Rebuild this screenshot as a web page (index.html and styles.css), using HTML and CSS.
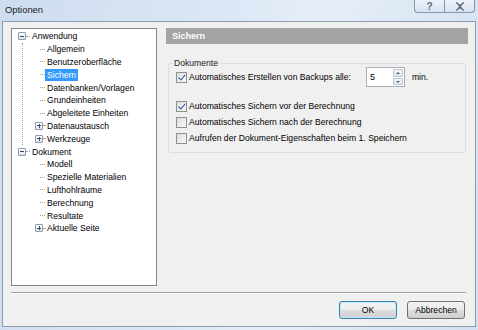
FILE: index.html
```html
<!DOCTYPE html>
<html lang="de">
<head>
    <meta charset="UTF-8">
    <title>Optionen</title>
    <link rel="stylesheet" href="styles.css">
</head>
<body>
    <div class="window">
        <div class="titlebar">
            <span class="title">Optionen</span>
            <div class="caption-buttons">
                <span class="cap-btn help">?</span>
                <span class="cap-btn close">
                    <svg width="10" height="9" viewBox="0 0 10 9">
                        <path d="M1 0.5 L5 3.5 L9 0.5 M1 8.5 L5 5.5 L9 8.5 M2 1 L8 8 M8 1 L2 8" fill="none" stroke="#5c6b80" stroke-width="1.2"/>
                    </svg>
                </span>
            </div>
        </div>

        <div class="client">
            <div class="main">
                <div class="tree">
                    <div class="node root">
                        <span class="exp minus"></span><span class="hline"></span><span class="label">Anwendung</span>
                    </div>
                    <div class="children line">
                        <div class="node"><span class="tick"></span><span class="label">Allgemein</span></div>
                        <div class="node"><span class="tick"></span><span class="label">Benutzeroberfläche</span></div>
                        <div class="node"><span class="tick"></span><span class="label selected">Sichern</span></div>
                        <div class="node"><span class="tick"></span><span class="label">Datenbanken/Vorlagen</span></div>
                        <div class="node"><span class="tick"></span><span class="label">Grundeinheiten</span></div>
                        <div class="node"><span class="tick"></span><span class="label">Abgeleitete Einheiten</span></div>
                        <div class="node"><span class="exp plus"></span><span class="stub"></span><span class="label">Datenaustausch</span></div>
                        <div class="node"><span class="exp plus"></span><span class="stub"></span><span class="label">Werkzeuge</span></div>
                    </div>
                    <div class="node root">
                        <span class="exp minus"></span><span class="hline"></span><span class="label">Dokument</span>
                    </div>
                    <div class="children">
                        <div class="node"><span class="tick"></span><span class="label">Modell</span></div>
                        <div class="node"><span class="tick"></span><span class="label">Spezielle Materialien</span></div>
                        <div class="node"><span class="tick"></span><span class="label">Lufthohlräume</span></div>
                        <div class="node"><span class="tick"></span><span class="label">Berechnung</span></div>
                        <div class="node"><span class="tick"></span><span class="label">Resultate</span></div>
                        <div class="node"><span class="exp plus"></span><span class="stub"></span><span class="label">Aktuelle Seite</span></div>
                    </div>
                </div>

                <div class="panel">
                    <div class="panel-header">Sichern</div>
                    <fieldset class="group">
                        <legend>Dokumente</legend>
                        <div class="row first">
                            <span class="check checked"></span>
                            <span class="text">Automatisches Erstellen von Backups alle:</span>
                            <div class="spin">
                                <span class="spin-value">5</span>
                                <div class="spin-buttons">
                                    <span class="spin-btn up"></span>
                                    <span class="spin-btn down"></span>
                                </div>
                            </div>
                            <span class="unit">min.</span>
                        </div>
                        <div class="row spaced">
                            <span class="check checked"></span>
                            <span class="text">Automatisches Sichern vor der Berechnung</span>
                        </div>
                        <div class="row">
                            <span class="check"></span>
                            <span class="text">Automatisches Sichern nach der Berechnung</span>
                        </div>
                        <div class="row">
                            <span class="check"></span>
                            <span class="text">Aufrufen der Dokument-Eigenschaften beim 1. Speichern</span>
                        </div>
                    </fieldset>
                </div>
            </div>

            <div class="separator"></div>

            <div class="buttons">
                <button class="btn default">OK</button>
                <button class="btn">Abbrechen</button>
            </div>
        </div>
    </div>
</body>
</html>
```

FILE: styles.css
```css
* {
    box-sizing: border-box;
}

body {
    margin: 0;
    width: 478px;
    height: 330px;
    overflow: hidden;
    font-family: "Liberation Sans", Arial, sans-serif;
    font-size: 8.6px;
    color: #000;
    background: #d3e1f1;
}

.window {
    width: 478px;
    height: 330px;
    background: linear-gradient(100deg, #cddcef 0%, #dce8f5 45%, #e6eef8 60%, #d2e0f1 100%);
}

.titlebar {
    height: 21px;
    display: flex;
    justify-content: space-between;
    align-items: flex-start;
}

.title {
    padding: 4px 0 0 5px;
    font-size: 9.4px;
    color: #1b1b1b;
}

.caption-buttons {
    display: flex;
    margin-right: 3px;
}

.cap-btn {
    width: 30px;
    height: 13px;
    display: flex;
    align-items: center;
    justify-content: center;
    border: 1px solid #8797ab;
    border-top: none;
    background: linear-gradient(#eef3f9, #d8e3f0);
    color: #5c6b80;
    font-size: 10px;
    font-weight: bold;
}

.cap-btn.help {
    border-radius: 0 0 0 4px;
    border-right: none;
}

.cap-btn.close {
    width: 31px;
    border-radius: 0 0 4px 0;
}

.client {
    margin: 0 2px;
    height: 306px;
    border: 1px solid #8e9caf;
    background: #f0f0f0;
    padding: 6px 7px 0 8px;
}

.main {
    display: flex;
    gap: 9px;
}

/* tree */

.tree {
    width: 146px;
    height: 258px;
    background: #fff;
    border: 1px solid #828790;
    padding-top: 1px;
}

.node {
    height: 12.8px;
    display: flex;
    align-items: center;
    white-space: nowrap;
}

.root {
    padding-left: 6px;
}

.exp {
    width: 8px;
    height: 8px;
    border: 1px solid #8d9bb0;
    border-radius: 1px;
    background: linear-gradient(#fff, #dfe4ea);
    position: relative;
    flex: none;
}

.exp::before {
    content: "";
    position: absolute;
    left: 1px;
    top: 2.5px;
    width: 4px;
    height: 1px;
    background: #3b4d6b;
}

.exp.plus::after {
    content: "";
    position: absolute;
    left: 2.5px;
    top: 1px;
    width: 1px;
    height: 4px;
    background: #3b4d6b;
}

.hline {
    width: 4px;
    border-top: 1px dotted #a0a0a0;
}

.stub {
    width: 2px;
    border-top: 1px dotted #a0a0a0;
}

.tick {
    width: 5px;
    margin-left: 5px;
    border-top: 1px dotted #a0a0a0;
}

.label {
    padding: 0 2px;
    line-height: 12px;
}

.label.selected {
    background: #3399ff;
    color: #fff;
}

.children {
    margin-left: 10px;
    border-left: 1px dotted transparent;
    padding-left: 12px;
}

.children.line {
    border-left-color: #a0a0a0;
}

/* right panel */

.panel {
    width: 302px;
}

.panel-header {
    height: 16px;
    background: #a3a3a3;
    color: #fff;
    font-weight: bold;
    font-size: 9px;
    line-height: 16px;
    padding-left: 6px;
}

.group {
    margin: 13px 2px 0;
    border: 1px solid #d5dfe5;
    border-radius: 3px;
    padding: 0 7px 6px 7px;
    min-width: 0;
}

.group legend {
    padding: 0 1px;
    margin-left: -3px;
    line-height: 12px;
    color: #1b1b1b;
}

.row {
    display: flex;
    align-items: center;
    height: 16px;
}

.row.first {
    height: 20px;
    margin-top: -2px;
}

.row.spaced {
    margin-top: 11px;
}

.check {
    width: 11px;
    height: 11px;
    border: 1px solid #8f8f8f;
    background: linear-gradient(135deg, #dcdcdc, #fbfbfb);
    margin-right: 2px;
    position: relative;
    flex: none;
}

.check.checked::after {
    content: "";
    position: absolute;
    left: 3px;
    top: 0.5px;
    width: 2.5px;
    height: 5.5px;
    border: solid #2a55a8;
    border-width: 0 1.5px 1.5px 0;
    transform: rotate(40deg);
}

.spin {
    margin-left: 15px;
    width: 39px;
    height: 20px;
    border: 1px solid #abadb3;
    background: #fff;
    display: flex;
    align-items: center;
    justify-content: space-between;
    padding: 1px 1px 1px 3px;
}

.spin-value {
    font-size: 9px;
}

.spin-buttons {
    display: flex;
    flex-direction: column;
    gap: 1px;
    height: 100%;
}

.spin-btn {
    width: 10px;
    flex: 1;
    border: 1px solid #b8c6d6;
    border-radius: 1px;
    background: linear-gradient(#f4f7fb, #dde6f0);
    position: relative;
}

.spin-btn::after {
    content: "";
    position: absolute;
    left: 2px;
    top: 2px;
    border-left: 2px solid transparent;
    border-right: 2px solid transparent;
}

.spin-btn.up::after {
    border-bottom: 2px solid #4c607a;
}

.spin-btn.down::after {
    border-top: 2px solid #4c607a;
}

.unit {
    margin-left: 7px;
}

/* bottom */

.separator {
    margin: 6px 2px 0 0;
    border-top: 1px solid #a0a0a0;
    border-bottom: 1px solid #fff;
}

.buttons {
    display: flex;
    justify-content: flex-end;
    gap: 10px;
    margin-top: 7px;
    padding-right: 3px;
}

.btn {
    width: 58px;
    height: 18px;
    font-family: inherit;
    font-size: 8.6px;
    color: #000;
    border: 1px solid #707070;
    border-radius: 3px;
    background: linear-gradient(#f2f2f2 0%, #ebebeb 50%, #dddddd 51%, #cfcfcf 100%);
    padding: 0;
}

.btn.default {
    border-color: #3c7fb1;
    box-shadow: inset 0 0 0 1px #bfe6f9;
}
```
